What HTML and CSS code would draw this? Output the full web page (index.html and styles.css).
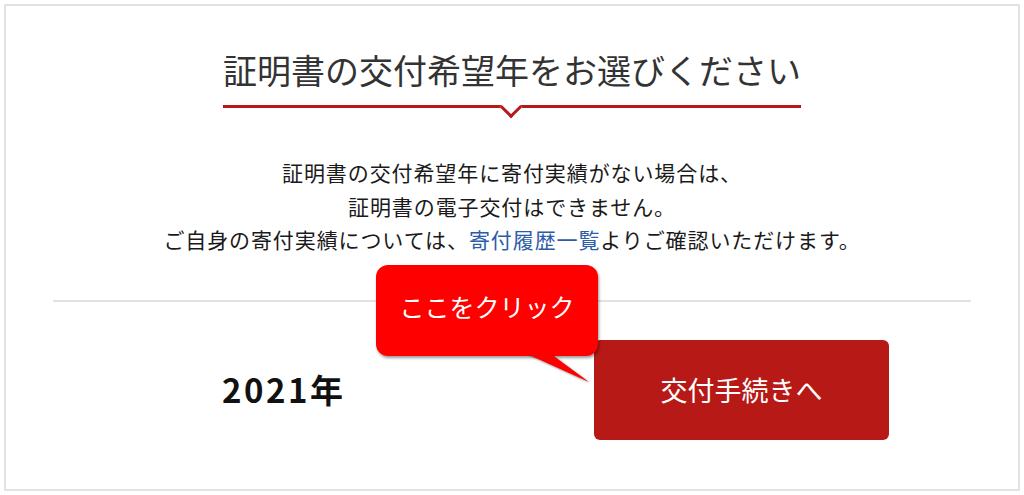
FILE: index.html
```html
<!DOCTYPE html>
<html lang="ja">
<head>
<meta charset="utf-8">
<title>証明書の交付希望年をお選びください</title>
<link rel="stylesheet" href="styles.css">
</head>
<body>
<div class="card">
  <div class="head">
    <h2 class="title">証明書の交付希望年をお選びください</h2>
  </div>
  <p class="lead">証明書の交付希望年に寄付実績がない場合は、<br>証明書の電子交付はできません。<br>ご自身の寄付実績については、<a class="link" href="#">寄付履歴一覧</a>よりご確認いただけます。</p>
  <div class="list">
    <div class="row">
      <div class="year">2021年</div>
      <a class="btn" href="#">交付手続きへ</a>
    </div>
  </div>
  <div class="callout">
    <span class="callout-text">ここをクリック</span>
    <svg class="callout-tail" width="70" height="36" viewBox="0 0 70 36"><polygon points="0,0 24,0 62,28" fill="#ff0000"/></svg>
  </div>
</div>
</body>
</html>
```

FILE: styles.css
```css
html, body {
  margin: 0;
  padding: 0;
  background: #ffffff;
}
body {
  padding: 4px;
  font-family: "Noto Sans CJK JP", "Noto Sans", sans-serif;
  color: #222222;
}
.card {
  position: relative;
  box-sizing: border-box;
  height: 487px;
  width: 1016px;
  border: 2px solid #e2e2e2;
  padding-top: 38px;
}
.head {
  display: flex;
  justify-content: center;
}
.title {
  position: relative;
  margin: 0;
  font-size: 34px;
  line-height: 51px;
  font-weight: 400;
  color: #333333;
  padding: 0 0 10px;
  border-bottom: 3px solid #b5191a;
  letter-spacing: 0;
}
.title::after {
  content: "";
  position: absolute;
  left: 50%;
  bottom: -10px;
  width: 13px;
  height: 13px;
  margin-left: -9px;
  background: #ffffff;
  border-right: 3px solid #b5191a;
  border-bottom: 3px solid #b5191a;
  transform: rotate(45deg);
}
.lead {
  margin: 48px 0 0;
  text-align: center;
  font-size: 21px;
  line-height: 33.5px;
  letter-spacing: 0.9px;
  color: #1a1a1a;
}
.link {
  color: #2c5ca8;
  text-decoration: none;
}
.list {
  margin: 43px 47px 0;
  border-top: 2px solid #e2e2e2;
  padding: 38px 82px 0 169px;
}
.row {
  display: flex;
  align-items: center;
  justify-content: space-between;
}
.year {
  font-size: 33px;
  font-weight: 700;
  letter-spacing: 2.5px;
  color: #111111;
  padding-bottom: 2px;
}
.btn {
  display: flex;
  align-items: center;
  justify-content: center;
  width: 295px;
  height: 100px;
  border-radius: 6px;
  background: #b71916;
  color: #ffffff;
  font-size: 27px;
  text-decoration: none;
}
.callout {
  position: absolute;
  left: 370px;
  top: 259px;
  width: 222px;
  height: 91px;
  border-radius: 12px;
  background: #ff0000;
  box-shadow: 1px 2px 3px rgba(0, 0, 0, 0.4);
  display: flex;
  align-items: center;
  justify-content: center;
}
.callout-text {
  color: #ffffff;
  font-size: 25px;
  padding-bottom: 10px;
}
.callout-tail {
  position: absolute;
  left: 151px;
  top: 89px;
  filter: drop-shadow(1px 1px 1px rgba(0, 0, 0, 0.45));
}
```
